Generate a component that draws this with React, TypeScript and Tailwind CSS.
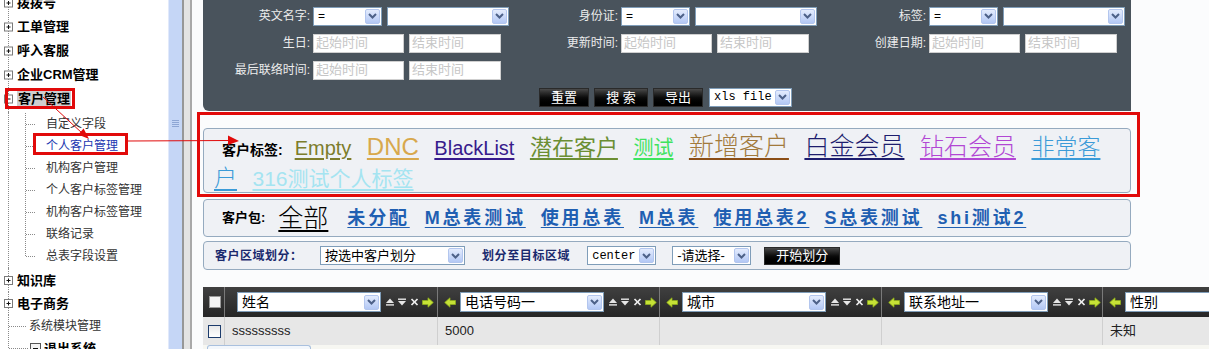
import React from 'react'

function Chevron() {
  return (
    <span className="flex h-[15px] w-[15px] shrink-0 items-center justify-center rounded-[2px] border border-[#b3c6ee] bg-linear-to-b from-[#e4ecfd] to-[#b3c8f5]">
      <svg width="9" height="6" viewBox="0 0 9 6">
        <path d="M1 1 L4.5 4.5 L8 1" fill="none" stroke="#4d6188" strokeWidth="2" />
      </svg>
    </span>
  )
}

function Select({
  className = '',
  value = '',
  textClass = 'text-[12px]',
}: {
  className?: string
  value?: string
  textClass?: string
}) {
  return (
    <div
      className={`flex h-[19px] shrink-0 items-center justify-between border border-[#7f9db9] bg-white pl-[4px] pr-px text-black ${className}`}
    >
      <span className={`truncate leading-none ${textClass}`}>{value}</span>
      <Chevron />
    </div>
  )
}

function TimeInput({ placeholder, className = '' }: { placeholder: string; className?: string }) {
  return (
    <input
      readOnly
      placeholder={placeholder}
      className={`h-[19px] shrink-0 border border-[#cfcfcf] bg-white px-[2px] text-[13px] outline-none placeholder:text-[#c6c6c6] ${className}`}
    />
  )
}

function BlackButton({ label, className = '' }: { label: string; className?: string }) {
  return (
    <button className={`flex shrink-0 items-center justify-center border border-[#2a2a2a] bg-linear-to-b from-[#4a4a4a] via-[#0c0c0c] to-black text-[13px] leading-none text-white ${className}`}>
      {label}
    </button>
  )
}

// tree connector drawings for the left menu
function TopNode({ h, sign }: { h: number; sign: '+' | '-' }) {
  const c = h / 2
  return (
    <svg width="17" height={h} className="shrink-0">
      <line x1="8.5" y1="0" x2="8.5" y2={h} stroke="#8a8a8a" strokeDasharray="1 1" />
      <rect x="4.5" y={c - 4} width="8" height="8" fill="white" stroke="#7a7a7a" />
      <line x1="6.5" y1={c} x2="10.5" y2={c} stroke="#111" />
      {sign === '+' && <line x1="8.5" y1={c - 2} x2="8.5" y2={c + 2} stroke="#111" />}
    </svg>
  )
}

function ChildNode({ last }: { last?: boolean }) {
  return (
    <svg width="40" height="22" className="shrink-0">
      <line x1="8.5" y1="0" x2="8.5" y2="22" stroke="#8a8a8a" strokeDasharray="1 1" />
      <line x1="25.5" y1="0" x2="25.5" y2={last ? 11 : 22} stroke="#8a8a8a" strokeDasharray="1 1" />
      <line x1="26" y1="11.5" x2="36" y2="11.5" stroke="#8a8a8a" strokeDasharray="1 1" />
    </svg>
  )
}

const children = ['自定义字段', '个人客户管理', '机构客户管理', '个人客户标签管理', '机构客户标签管理', '联络记录', '总表字段设置']

function Sidebar() {
  return (
    <aside className="-mt-[9px] w-[168px] shrink-0 overflow-hidden bg-white">
      {['拨拨号', '工单管理', '呼入客服', '企业CRM管理'].map((t) => (
        <div key={t} className="flex h-[24px] items-center">
          <TopNode h={24} sign="+" />
          <span className="text-[13px] font-bold text-black">{t}</span>
        </div>
      ))}
      <div className="flex h-[24px] items-center">
        <TopNode h={24} sign="-" />
        <span className="bg-[#cfcfcf] px-px text-[13px] font-bold leading-[16px] text-black">客户管理</span>
      </div>
      <div className="flex h-[2px]">
        <span className="ml-[8px] border-l border-dotted border-[#8a8a8a]" />
      </div>
      {children.map((t, i) => (
        <div key={t} className="flex h-[22px] items-center">
          <ChildNode last={i === children.length - 1} />
          <span className={`ml-[6px] text-[12px] ${i === 1 ? 'text-[#1a36b0]' : 'text-[#333]'}`}>{t}</span>
        </div>
      ))}
      <div className="flex h-[2px]">
        <span className="ml-[8px] border-l border-dotted border-[#8a8a8a]" />
      </div>
      {['知识库', '电子商务'].map((t) => (
        <div key={t} className="flex h-[23px] items-center">
          <TopNode h={23} sign="+" />
          <span className="text-[13px] font-bold text-black">{t}</span>
        </div>
      ))}
      <div className="flex h-[22px] items-center">
        <svg width="29" height="22" className="shrink-0">
          <line x1="8.5" y1="0" x2="8.5" y2="22" stroke="#8a8a8a" strokeDasharray="1 1" />
          <line x1="9" y1="11.5" x2="26" y2="11.5" stroke="#8a8a8a" strokeDasharray="1 1" />
        </svg>
        <span className="text-[12px] text-[#333]">系统模块管理</span>
      </div>
      <div className="flex h-[23px] items-center">
        <svg width="44" height="23" className="shrink-0">
          <line x1="8.5" y1="0" x2="8.5" y2="12" stroke="#8a8a8a" strokeDasharray="1 1" />
          <line x1="9" y1="11.5" x2="29" y2="11.5" stroke="#8a8a8a" strokeDasharray="1 1" />
          <rect x="30.5" y="6.5" width="10" height="10" fill="#f4f4f4" stroke="#555" />
          <line x1="33" y1="11.5" x2="38" y2="11.5" stroke="#111" />
        </svg>
        <span className="text-[13px] font-bold text-black">退出系统</span>
      </div>
    </aside>
  )
}

function Splitter() {
  return (
    <div className="flex shrink-0">
      <div className="flex w-[14px] justify-center border-l border-[#e1e9fb] bg-[#c5d6f6] pt-[119px]">
        <svg width="7" height="8">
          <line x1="0" y1="1.5" x2="7" y2="1.5" stroke="#8ea6d4" />
          <line x1="0" y1="3.5" x2="7" y2="3.5" stroke="#8ea6d4" />
          <line x1="0" y1="5.5" x2="7" y2="5.5" stroke="#8ea6d4" />
          <line x1="0" y1="7.5" x2="7" y2="7.5" stroke="#8ea6d4" />
        </svg>
      </div>
      <div className="w-[2px] bg-[#979797]" />
      <div className="w-[6px] bg-[#e3e3e3]" />
      <div className="w-[2px] bg-[#a9a9a9]" />
    </div>
  )
}

function Field({ label, children }: { label?: string; children?: React.ReactNode }) {
  return (
    <div className="flex h-[20px] items-center">
      <span className="w-[110px] shrink-0 pr-[3px] text-right text-[12px] text-[#ececec]">{label}</span>
      <div className="flex gap-[5px]">{children}</div>
    </div>
  )
}

function SelectPair() {
  return (
    <>
      <Select className="w-[69px]" value="=" />
      <Select className="w-[122px]" />
    </>
  )
}

function TimePair() {
  return (
    <>
      <TimeInput className="w-[91px]" placeholder="起始时间" />
      <TimeInput className="w-[92px]" placeholder="结束时间" />
    </>
  )
}

function FilterPanel() {
  return (
    <section className="flex h-[111px] w-[928px] shrink-0 flex-col gap-[7px] rounded-bl-[6px] bg-[#49535c] pt-[6px]">
      <div className="grid grid-cols-[308px_308px_308px] gap-y-[7px]">
        <Field label="英文名字:"><SelectPair /></Field>
        <Field label="身份证:"><SelectPair /></Field>
        <Field label="标签:"><SelectPair /></Field>
        <Field label="生日:"><TimePair /></Field>
        <Field label="更新时间:"><TimePair /></Field>
        <Field label="创建日期:"><TimePair /></Field>
        <Field label="最后联络时间:"><TimePair /></Field>
      </div>
      <div className="flex h-[20px] items-center justify-center gap-[5px] pr-[3px]">
        <BlackButton label="重置" className="h-[19px] w-[50px]" />
        <BlackButton label="搜 索" className="h-[19px] w-[54px]" />
        <BlackButton label="导出" className="h-[19px] w-[50px]" />
        <Select className="ml-px w-[83px]" value="xls file" textClass="text-[12px] font-['Liberation_Mono',monospace]" />
      </div>
    </section>
  )
}

const tags = [
  { t: 'Empty', c: 'text-[#7d7d2c] text-[20px]' },
  { t: 'DNC', c: 'text-[#d8a84c] text-[24px]' },
  { t: 'BlackList', c: 'text-[#371b8c] text-[20px]' },
  { t: '潜在客户', c: 'text-[#6b8e33] text-[22px]' },
  { t: '测试', c: 'text-[#3fe35f] text-[20px]' },
  { t: '新增客户', c: 'text-[#a27a3c] decoration-[#8b4e16] text-[25px] font-light' },
  { t: '白金会员', c: 'text-[#1d1d6e] text-[25px] font-light' },
  { t: '钻石会员', c: 'text-[#b247d4] text-[24px] font-light' },
  { t: '非常客户', c: 'text-[#3b9bd8] text-[23px] font-light' },
  { t: '316测试个人标签', c: 'text-[#a5e4f1] text-[21px]' },
]

function TagBox() {
  return (
    <section className="mt-[17px] h-[65px] w-[928px] shrink-0 rounded-[4px] border border-[#95aabf] bg-[#eff1f5] pl-[10px] pr-[18px] pt-[4px] leading-[27px]">
      <span className="ml-[8px] mr-[12px] text-[14px] font-bold text-black">客户标签:</span>
      {tags.map((g) => (
        <a key={g.t} className={`mr-[15.5px] underline underline-offset-[3px] ${g.c}`}>
          {g.t}
        </a>
      ))}
    </section>
  )
}

const packs = ['未分配', 'M总表测试', '使用总表', 'M总表', '使用总表2', 'S总表测试', 'shi测试2']

function PackageBox() {
  return (
    <section className="mt-[6px] flex h-[38px] w-[928px] shrink-0 items-center rounded-[4px] border border-[#95aabf] bg-[#eff1f5] pl-[18px]">
      <span className="mr-[13px] text-[13px] font-bold text-black">客户包:</span>
      <a className="mr-[19px] text-[25px] font-light leading-none text-black underline underline-offset-[3px]">全部</a>
      {packs.map((p) => (
        <a key={p} className="mr-[15px] text-[18px] font-bold leading-none tracking-[2.8px] text-[#1f5fb2] underline underline-offset-[3px]">
          {p}
        </a>
      ))}
    </section>
  )
}

function RegionBox() {
  return (
    <section className="mt-[4px] flex h-[29px] w-[928px] shrink-0 items-center rounded-[4px] border border-[#95aabf] bg-[#eff1f5] pl-[11px]">
      <span className="w-[105px] shrink-0 text-[12px] font-bold tracking-[0.5px] text-[#1b2a6e]">客户区域划分：</span>
      <Select className="w-[145px]" value="按选中客户划分" textClass="text-[13px]" />
      <span className="ml-[17px] text-[12px] font-bold tracking-[0.6px] text-[#1b2a6e]">划分至目标区域</span>
      <Select className="ml-[17px] w-[69px]" value="center" textClass="text-[12px] font-['Liberation_Mono',monospace]" />
      <Select className="ml-[16px] w-[79px]" value="-请选择-" textClass="text-[13px]" />
      <BlackButton label="开始划分" className="ml-[13px] h-[18px] w-[76px]" />
    </section>
  )
}

function Arrow({ dir }: { dir: 'left' | 'right' }) {
  return (
    <svg width="12" height="11" viewBox="0 0 12 11" className="shrink-0">
      <path
        d={dir === 'right' ? 'M0.5 3.5 H6 V0.8 L11.3 5.5 L6 10.2 V7.5 H0.5 Z' : 'M11.5 3.5 H6 V0.8 L0.7 5.5 L6 10.2 V7.5 H11.5 Z'}
        fill="#c6e236"
        stroke="#8fae1c"
        strokeWidth="0.8"
      />
    </svg>
  )
}

function SortIcons() {
  return (
    <span className="flex items-center gap-px">
      <svg width="35" height="12" viewBox="0 0 35 12" className="shrink-0">
        <polygon points="0,7 4,2.5 8,7" fill="#e6e6e6" />
        <rect x="0" y="8.2" width="8" height="1.4" fill="#e6e6e6" />
        <rect x="12" y="2.5" width="8" height="1.4" fill="#e6e6e6" />
        <polygon points="12,5 20,5 16,9.5" fill="#e6e6e6" />
        <line x1="25.5" y1="3" x2="31.5" y2="9" stroke="#eeeeee" strokeWidth="1.7" />
        <line x1="31.5" y1="3" x2="25.5" y2="9" stroke="#eeeeee" strokeWidth="1.7" />
      </svg>
      <Arrow dir="right" />
    </span>
  )
}

const cols = [
  { label: '姓名', w: 'w-[213px]', value: 'sssssssss' },
  { label: '电话号码一', w: 'w-[222px]', value: '5000' },
  { label: '城市', w: 'w-[222px]', value: '' },
  { label: '联系地址一', w: 'w-[221px]', value: '' },
  { label: '性别', w: 'w-[200px]', value: '未知' },
]

function Grid() {
  return (
    <section className="mt-[17px] flex shrink-0 flex-col">
      <div className="flex h-[30px] bg-linear-to-b from-[#404040] to-[#262626]">
        <div className="flex w-[22px] shrink-0 items-center border-r border-[#7a7a7a] pl-[6px]">
          <span className="h-[12px] w-[12px] border border-[#9a9a9a] bg-[#f4f4f4]" />
        </div>
        {cols.map((c, i) => (
          <div key={c.label} className={`flex shrink-0 items-center border-r border-[#7a7a7a] ${c.w}`}>
            {i === 0 ? <span className="w-[12px]" /> : <span className="ml-[6px] mr-[4px] flex"><Arrow dir="left" /></span>}
            <Select className="h-[20px] w-[144px]" value={c.label} textClass="text-[14px]" />
            <span className="ml-[5px] flex">{i < 4 && <SortIcons />}</span>
          </div>
        ))}
      </div>
      <div className="flex h-[28px] bg-[#e7e7e7] text-[13px] text-[#222]">
        <div className="flex w-[22px] shrink-0 items-center border-r border-[#cfcfcf] pl-[5px]">
          <span className="h-[13px] w-[13px] border border-[#1d3c6c] bg-linear-to-b from-[#e9e9e9] to-white" />
        </div>
        {cols.map((c) => (
          <div key={c.label} className={`flex shrink-0 items-center border-r border-[#cfcfcf] pl-[7px] ${c.w}`}>
            {c.value}
          </div>
        ))}
      </div>
      <div className="h-[4px] bg-[#f7f7f2]">
        <div className="ml-[4px] h-[4px] w-[104px] rounded-t-[3px] border border-b-0 border-[#a9c0de] bg-[#f3f7fc]" />
      </div>
    </section>
  )
}

function Annotations() {
  const red = '#e10a0a'
  return (
    <svg className="pointer-events-none absolute left-0 top-0" width="1209" height="349">
      <rect x="6.5" y="89.5" width="67" height="18" fill="none" stroke={red} strokeWidth="3" />
      <rect x="34.5" y="134.5" width="92" height="19" fill="none" stroke={red} strokeWidth="3" />
      <rect x="198.5" y="113.5" width="940" height="82" fill="none" stroke={red} strokeWidth="3" />
      <line x1="43" y1="97" x2="82" y2="133" stroke={red} strokeWidth="1" />
      <polygon points="89,139 78.2,134.5 83.6,128.6" fill={red} />
      <line x1="128" y1="141" x2="229" y2="140.5" stroke={red} strokeWidth="1" />
      <polygon points="239,141 228,135.5 228,145" fill={red} />
    </svg>
  )
}

export default function App() {
  return (
    <div className="relative flex h-[349px] w-[1209px] overflow-hidden bg-white font-['Liberation_Sans','Noto_Sans_CJK_SC',sans-serif] text-[12px]">
      <Sidebar />
      <Splitter />
      <main className="flex min-w-0 flex-1 flex-col overflow-hidden bg-[#fbfcfd] pl-[11px]">
        <FilterPanel />
        <TagBox />
        <PackageBox />
        <RegionBox />
        <Grid />
      </main>
      <Annotations />
    </div>
  )
}
